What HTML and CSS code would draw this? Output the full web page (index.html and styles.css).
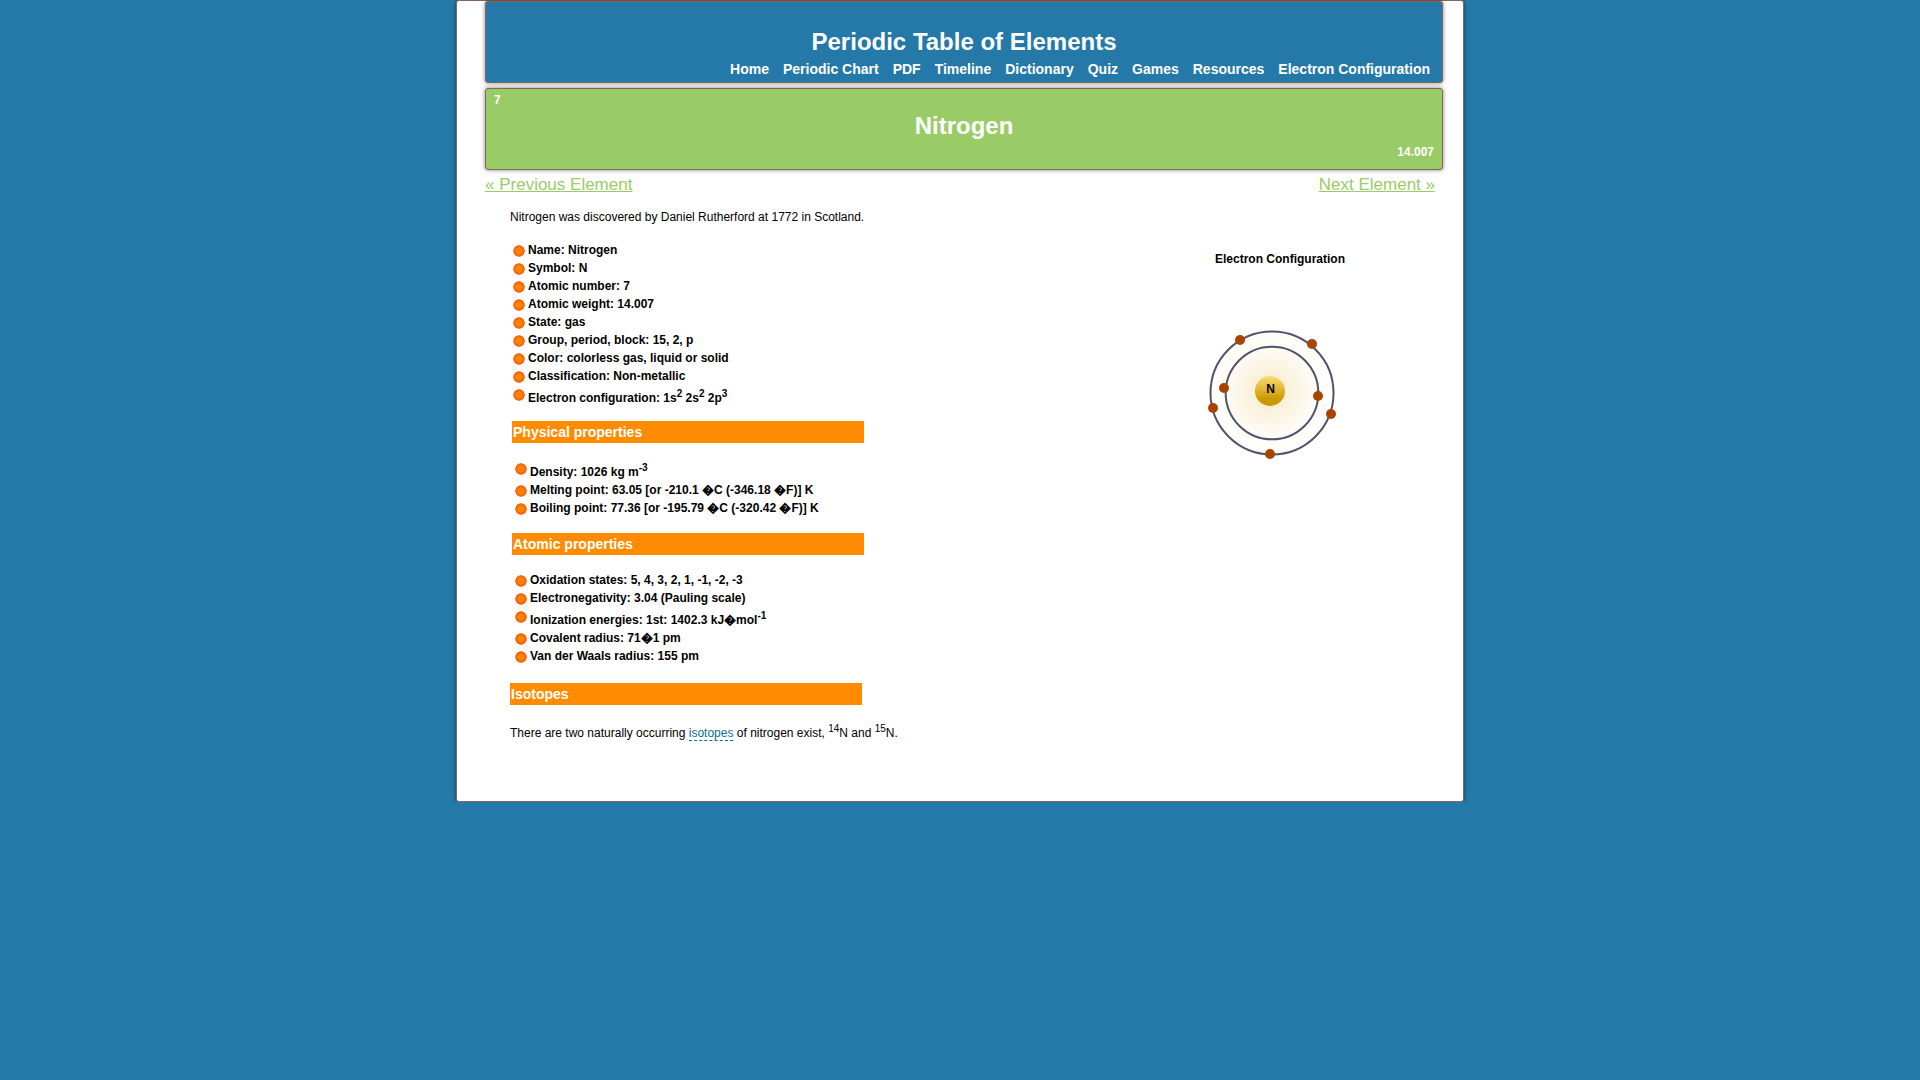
FILE: index.html
```html
<!DOCTYPE html>
<html lang="en">
<head>
<meta charset="utf-8">
<meta name="viewport" content="width=device-width, initial-scale=1">
<title>Nitrogen - Periodic Table of Elements</title>
<link rel="stylesheet" href="styles.css">
</head>
<body>
<div class="page">
  <header class="panel site-header">
    <div class="site-title">Periodic Table of Elements</div>
    <nav class="site-nav">
      <a href="#home">Home</a>
      <a href="#chart">Periodic Chart</a>
      <a href="#pdf">PDF</a>
      <a href="#timeline">Timeline</a>
      <a href="#dictionary">Dictionary</a>
      <a href="#quiz">Quiz</a>
      <a href="#games">Games</a>
      <a href="#resources">Resources</a>
      <a href="#configuration">Electron Configuration</a>
    </nav>
  </header>

  <section class="panel element-banner">
    <div class="element-number">7</div>
    <h1 class="element-name">Nitrogen</h1>
    <div class="element-weight">14.007</div>
  </section>

  <nav class="pager">
    <a href="#previous">« Previous Element</a>
    <a href="#next">Next Element »</a>
  </nav>

  <div class="columns">
    <main class="content">
      <p class="text">Nitrogen was discovered by Daniel Rutherford at 1772 in Scotland.</p>
      <ul class="facts">
        <li>Name: Nitrogen</li>
        <li>Symbol: N</li>
        <li>Atomic number: 7</li>
        <li>Atomic weight: 14.007</li>
        <li>State: gas</li>
        <li>Group, period, block: 15, 2, p</li>
        <li>Color: colorless gas, liquid or solid</li>
        <li>Classification: Non-metallic</li>
        <li>Electron configuration: 1s<sup>2</sup> 2s<sup>2</sup> 2p<sup>3</sup></li>
      </ul>
      <section class="properties">
        <h2 class="bar">Physical properties</h2>
        <ul class="facts">
          <li>Density: 1026 kg m<sup>-3</sup></li>
          <li>Melting point: 63.05 [or -210.1 �C (-346.18 �F)] K</li>
          <li>Boiling point: 77.36 [or -195.79 �C (-320.42 �F)] K</li>
        </ul>
        <h2 class="bar">Atomic properties</h2>
        <ul class="facts">
          <li>Oxidation states: 5, 4, 3, 2, 1, -1, -2, -3</li>
          <li>Electronegativity: 3.04 (Pauling scale)</li>
          <li>Ionization energies: 1st: 1402.3 kJ�mol<sup>-1</sup></li>
          <li>Covalent radius: 71�1 pm</li>
          <li>Van der Waals radius: 155 pm</li>
        </ul>
      </section>
      <h2 class="bar">Isotopes</h2>
      <p class="text">There are two naturally occurring <a class="term" href="#isotopes">isotopes</a> of nitrogen exist, <sup>14</sup>N and <sup>15</sup>N.</p>
    </main>

    <aside class="diagram">
      <h2 class="diagram-title">Electron Configuration</h2>
      <svg class="atom" viewBox="0 0 146 146" role="img" aria-label="Nitrogen atom with two electron shells">
        <defs>
          <radialGradient id="glow">
            <stop offset="0" stop-color="#f7e8c4"/>
            <stop offset=".3" stop-color="#fbf2de"/>
            <stop offset=".65" stop-color="#fefcf6"/>
            <stop offset="1" stop-color="#fff"/>
          </radialGradient>
          <linearGradient id="core" x1="0" y1="0" x2="0" y2="1">
            <stop offset="0" stop-color="#fcdc7a"/>
            <stop offset=".75" stop-color="#cc9a00"/>
            <stop offset="1" stop-color="#c89600"/>
          </linearGradient>
        </defs>
        <circle cx="63" cy="71" r="70" fill="url(#glow)"/>
        <g fill="none" stroke="#50546a" stroke-width="2">
          <circle cx="65" cy="73" r="61.5"/>
          <circle cx="65" cy="73" r="46.3"/>
        </g>
        <circle cx="63" cy="71" r="15" fill="url(#core)"/>
        <g fill="#a94400">
          <circle cx="33" cy="20" r="5"/>
          <circle cx="105" cy="24" r="5"/>
          <circle cx="17" cy="68" r="5"/>
          <circle cx="111" cy="76" r="5"/>
          <circle cx="6" cy="88" r="5"/>
          <circle cx="124" cy="94" r="5"/>
          <circle cx="63" cy="134" r="5"/>
        </g>
        <text class="atom-symbol" x="63.5" y="73" text-anchor="middle">N</text>
      </svg>
    </aside>
  </div>
</div>
</body>
</html>
```
FILE: styles.css
```css
* {
  box-sizing: border-box;
}

body {
  margin: 0;
  background: #2479a9;
  color: #000;
  font: 12px/18px "Liberation Sans", Arial, sans-serif;
}

h1,
h2,
p,
ul {
  margin: 0;
  padding: 0;
}

sup {
  font-size: 10px;
}

.page {
  max-width: 1008px;
  margin: 0 auto;
  padding: 0 20px 59px 28px;
  background: #fff;
  border: 1px solid #86655f;
  border-radius: 3px;
  box-shadow: 0 0 4px rgba(0, 0, 0, 0.5);
}

.panel {
  min-height: 82px;
  border: 1px solid #86655f;
  border-radius: 3px;
  box-shadow: 0 0 4px rgba(0, 0, 0, 0.5);
  color: #fff;
  font-weight: bold;
}

.site-header {
  padding: 26px 12px 0;
  background: #2479a9;
}

.site-title,
.element-name {
  font-size: 24px;
  line-height: 28px;
  text-align: center;
}

.site-nav {
  display: flex;
  flex-wrap: wrap;
  justify-content: flex-end;
  gap: 0 14px;
  padding-top: 4px;
  font-size: 14px;
}

.site-nav a {
  color: #fff;
  text-decoration: none;
}

.element-banner {
  margin-top: 5px;
  padding: 2px 8px 0;
  background: #9c6;
}

.element-name {
  padding-top: 3px;
}

.element-weight {
  padding-top: 3px;
  text-align: right;
}

.pager {
  display: flex;
  justify-content: space-between;
  padding: 5px 8px 0 0;
  font-size: 17px;
  line-height: 20px;
}

.pager a {
  color: #9c6;
}

.columns {
  display: flex;
  justify-content: space-between;
  padding: 13px 90px 0 25px;
}

.content .facts {
  padding: 15px 3px 14px;
  list-style: none;
  font-weight: bold;
}

.facts li {
  padding-left: 15px;
  background: radial-gradient(circle 6px at 6px 6px, #ff9600, #ff8000 45%, #ff5a08 88%, rgba(255, 90, 30, 0.3) 98%, transparent) 0 4px / 12px 12px no-repeat;
}

.properties {
  padding: 0 2px;
}

.properties .facts {
  padding: 16px 3px;
}

.bar {
  width: 352px;
  padding: 2px 1px;
  background: #ff8c00;
  color: #fff;
  font-size: 14px;
  line-height: 18px;
}

.properties + .bar {
  margin: 2px 0 15px;
}

.term {
  border-bottom: 1px dashed #0c6f99;
  color: #0c6f99;
  text-decoration: none;
}

.diagram {
  width: 146px;
  padding-top: 42px;
}

.diagram-title {
  font-size: 12px;
  text-align: center;
}

.atom {
  display: block;
  width: 100%;
  margin-top: 52px;
}

.atom-symbol {
  font-size: 12px;
  font-weight: bold;
}
```
